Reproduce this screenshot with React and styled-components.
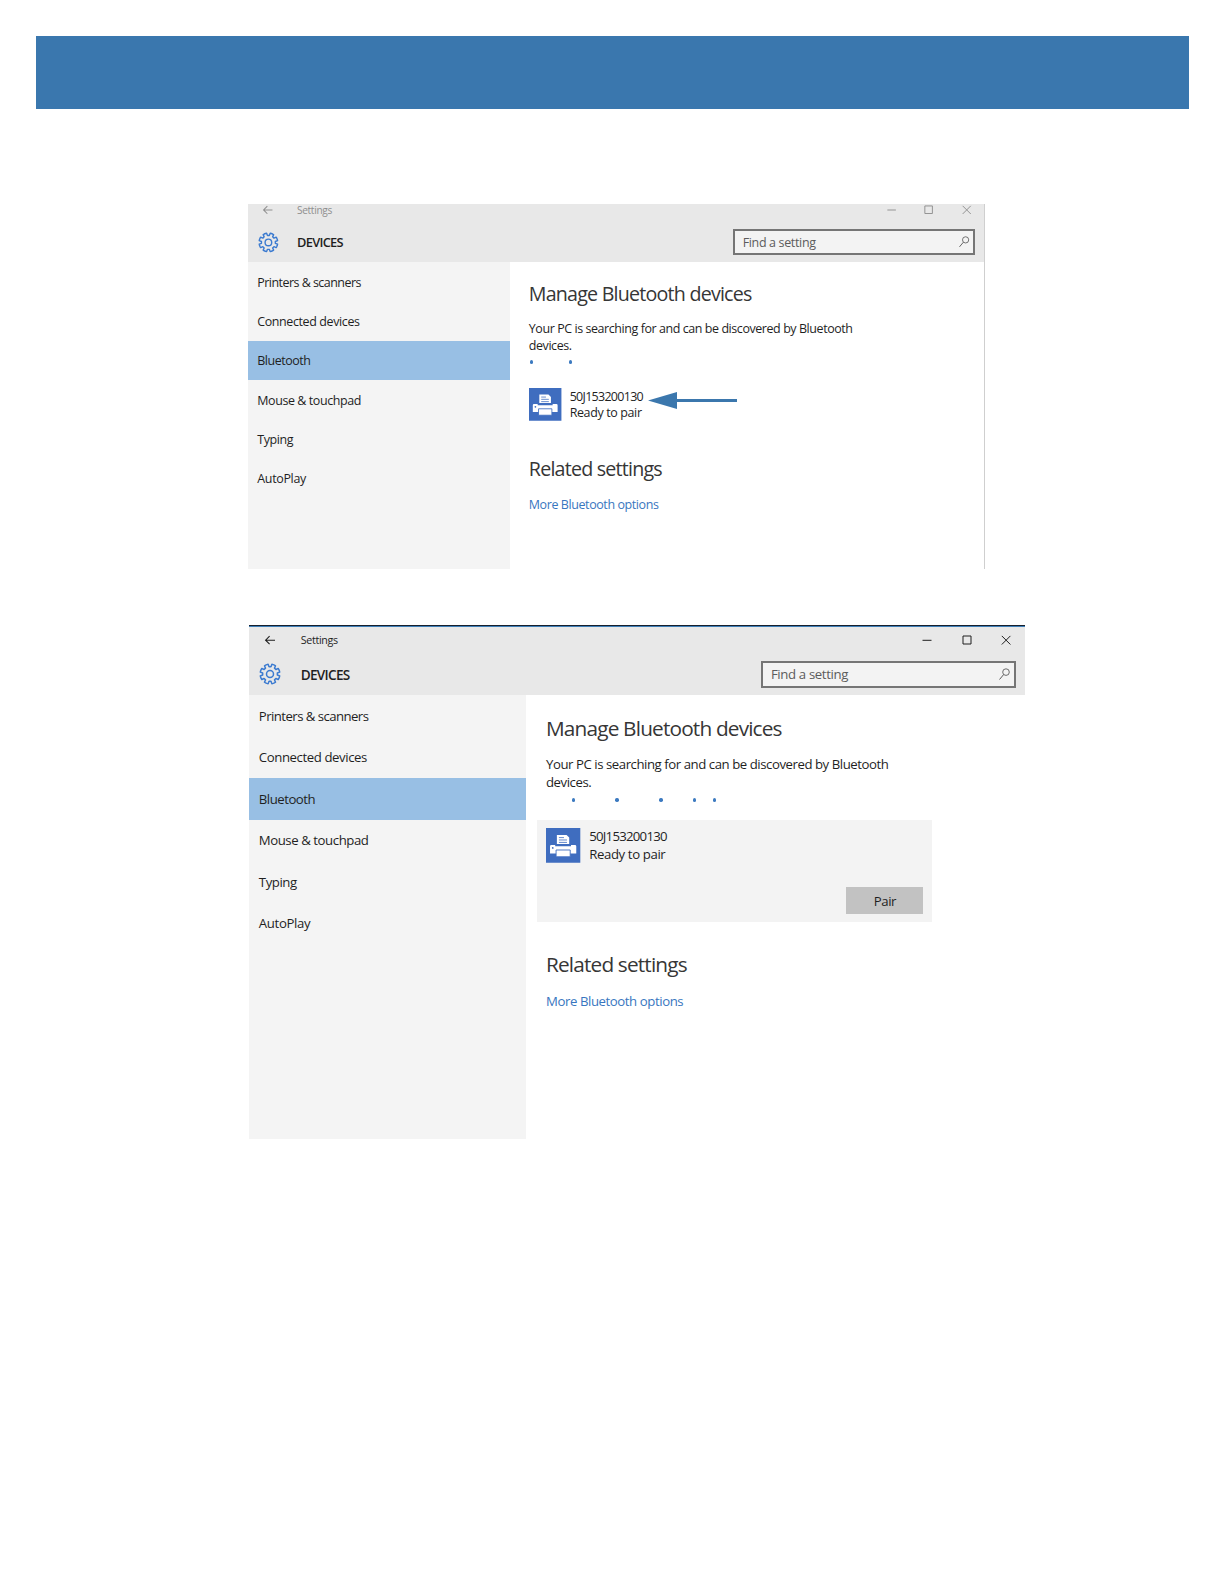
import React from "react";
import styled, { createGlobalStyle, ThemeProvider, css } from "styled-components";

const GlobalStyle = createGlobalStyle`
  body {
    margin: 0;
    background: #fff;
  }
  *, *::before, *::after {
    box-sizing: border-box;
  }
`;

/* Converts a design unit to pixels at the scale of the current window. */
const u = (n) => ({ theme }) => `${+(n * theme.scale).toFixed(3)}px`;

const Page = styled.div`
  height: 1584px;
  padding: 36px 35px 0 36px;
  font-family: "Open Sans", "Noto Sans", sans-serif;
  color: #1f1f1f;
`;

const Banner = styled.header`
  height: 73px;
  background: #3a77ae;
`;

const Figures = styled.main`
  display: flex;
  flex-direction: column;
  align-items: flex-start;
  gap: 56px;
  padding: 95px 0 0 212px;
`;

const Window = styled.section`
  display: flex;
  flex-direction: column;
  width: ${({ $width }) => $width}px;
  height: ${({ $height }) => $height}px;
  font-size: ${u(13.2)};
  white-space: nowrap;
  ${({ $edge }) => $edge && css`
    border-right: 1px solid #cfcfcf;
  `}
  ${({ $offset }) => $offset && css`
    margin-left: ${$offset}px;
  `}
`;

const Text = styled.span`
  letter-spacing: ${({ $track = -0.033 }) => $track}em;
`;

const Head = styled.div`
  display: flex;
  flex-direction: column;
  justify-content: flex-end;
  flex: none;
  height: ${({ $height }) => $height}px;
  overflow: hidden;
  background: #e8e8e8;
  ${({ $accent }) => $accent && css`
    border-top: 1px solid #17202c;
    box-shadow: inset 0 1px #3f7fb8;
  `}
`;

const TitleBar = styled.div`
  display: flex;
  align-items: center;
  flex: none;
  height: ${u(26)};
  font-size: ${u(10.7)};
  color: ${({ $inactive }) => ($inactive ? "#8f8f8f" : "#1f1f1f")};
`;

const HeaderRow = styled.div`
  display: flex;
  align-items: center;
  flex: none;
  height: ${u(42)};
  padding-right: ${u(9.2)};
`;

const IconCell = styled.div`
  display: flex;
  justify-content: center;
  flex: none;
  width: ${u(42.6)};
  margin-right: ${u(9.2)};
`;

const WindowControls = styled.div`
  display: flex;
  margin-left: auto;
  margin-right: ${u(-0.8)};

  svg {
    margin: 0 ${u(12.7)};
  }
`;

const AppTitle = styled(Text)`
  font-size: ${u(13.6)};
  font-weight: 600;
`;

const SearchBox = styled.div`
  display: flex;
  align-items: center;
  justify-content: space-between;
  width: ${({ $width }) => $width}px;
  height: ${u(27)};
  margin-left: auto;
  padding: 0 ${u(4)} 0 ${u(7.8)};
  border: 2px solid #757575;
  background: #f3f3f3;
  color: #5c5c5c;
`;

const Body = styled.div`
  display: flex;
  flex: 1;
`;

const Sidebar = styled.nav`
  flex: none;
  width: ${u(276.6)};
  padding-top: ${({ $inset }) => $inset}px;
  background: #f4f4f4;
`;

const NavItem = styled.div`
  display: flex;
  align-items: center;
  height: ${u(41.5)};
  padding-left: ${u(9.8)};
  background: ${({ $active }) => ($active ? "#98bfe4" : "transparent")};
`;

const Content = styled.div`
  flex: 1;
  padding: ${u(19)} 0 0 ${u(20.4)};
  margin-top: ${({ $inset }) => $inset}px;
`;

const Heading = styled.h2`
  margin: 0;
  font-size: ${u(20.8)};
  font-weight: 400;
  line-height: ${u(28)};
  letter-spacing: -0.04em;
  color: #363636;
`;

const Status = styled.p`
  margin: ${u(14.4)} 0 0;
  line-height: ${u(17.9)};
`;

const Progress = styled.div`
  display: flex;
  height: 4px;
  margin-top: ${u(6.2)};
`;

const Dot = styled.i`
  width: 3.4px;
  height: 3.4px;
  margin-left: ${({ $gap }) => $gap}px;
  border-radius: 50%;
  background: #3c7ac0;
`;

const DeviceCard = styled.div`
  display: flex;
  flex-direction: column;
  justify-content: space-between;
  width: ${u(395)};
  height: ${({ $open }) => u($open ? 102.5 : 52.5)};
  margin: ${u(17.3)} 0 0 ${u(-8.7)};
  padding: ${u(8)} ${u(9)} ${u(8.5)} ${u(9)};
  background: ${({ $open }) => ($open ? "#f3f3f3" : "transparent")};
`;

const DeviceRow = styled.div`
  display: flex;
`;

const DeviceText = styled.div`
  display: flex;
  flex-direction: column;
  width: ${u(83.4)};
  margin-left: ${u(8.6)};
  padding-top: ${u(0.4)};
  line-height: ${u(17.6)};
`;

const PairButton = styled.button`
  align-self: flex-end;
  width: ${u(77.7)};
  height: ${u(27)};
  padding: 1px 0 0 1px;
  border: 0;
  background: #c2c2c2;
  color: inherit;
  font: inherit;
`;

const Related = styled.div`
  padding-top: ${u(27.5)};
`;

const Link = styled.div`
  margin-top: ${u(15.2)};
  line-height: ${u(17.4)};
  color: #3876c0;
`;

const Glyph = styled.svg`
  display: block;
  flex: none;
  width: ${({ $w }) => u($w)};
  height: ${({ $h }) => u($h)};
  overflow: visible;
  fill: none;
  stroke: currentColor;
`;

const Pointer = styled.svg`
  display: block;
  flex: none;
  width: 89px;
  height: 17px;
  margin-top: 4px;
`;

const gearPath = (() => {
  const points = [];
  const tooth = [[-15, 7.4], [-11.5, 9.9], [-4, 9.9], [4, 9.9], [11.5, 9.9], [15, 7.4]];
  for (let i = 0; i < 8; i += 1) {
    const mid = 22.5 + i * 45;
    tooth.forEach(([offset, r]) => {
      const a = ((mid + offset) * Math.PI) / 180;
      points.push(`${(r * Math.sin(a)).toFixed(2)} ${(-r * Math.cos(a)).toFixed(2)}`);
    });
  }
  return `M${points.join("L")}Z`;
})();

const GearIcon = () => (
  <Glyph $w={22} $h={22} viewBox="-11 -11 22 22" color="#3c7bd0">
    <path d={gearPath} strokeWidth="1.5" strokeLinejoin="round" />
    <circle r="3.5" strokeWidth="1.5" />
  </Glyph>
);

const BackIcon = () => (
  <Glyph $w={10} $h={9} viewBox="0 0 10 9">
    <path d="M10 4.2H.4M4.6.2l-4 4 4 4" strokeWidth="1.1" />
  </Glyph>
);

const SearchIcon = () => (
  <Glyph $w={11} $h={12} viewBox="0 0 11 12">
    <circle cx="7" cy="4.1" r="3.3" strokeWidth=".9" />
    <path d="M4.6 6.6.5 11.5" strokeWidth="1" />
  </Glyph>
);

const PrinterIcon = () => (
  <Glyph $w={34.3} $h={34.7} viewBox="0 0 34 34.7" preserveAspectRatio="none">
    <path d="M0 0h34v34.7H0z" fill="#3f6dbf" stroke="none" />
    <path d="M10.8 7h9.6L23 9.4V16H10.8z" fill="#fff" stroke="none" />
    <path d="M12.8 9.6h5M12.8 12h8M12.8 14.4h8" stroke="#3f6dbf" strokeWidth=".8" />
    <path
      d="M5.2 16.9h3.9v1.3h15.7v-1.3h3.9q1.3 0 1.3 1.3v7.3H4v-7.3q0-1.3 1.2-1.3z"
      fill="#fff"
      stroke="none"
    />
    <path d="M10 22h14v6.8H10z" fill="#fff" stroke="#3f6dbf" strokeWidth=".9" />
    <circle cx="6.7" cy="19.9" r=".9" fill="#3f6dbf" stroke="none" />
  </Glyph>
);

const Controls = () => (
  <WindowControls>
    <Glyph $w={14} $h={10} viewBox="-2 0 14 10">
      <path d="M.5 5.3h9" />
    </Glyph>
    <Glyph $w={14} $h={10} viewBox="-2 0 14 10">
      <path d="M1 1h8v8H1z" />
    </Glyph>
    <Glyph $w={14} $h={10} viewBox="-2 0 14 10">
      <path d="m.8.9 8.6 8.6M9.4.9.8 9.5" />
    </Glyph>
  </WindowControls>
);

const ArrowPointer = () => (
  <Pointer viewBox="0 0 89 17" fill="#3b77ad">
    <path d="M0 8.5 29 0v7h60v3H29v7z" />
  </Pointer>
);

const NAV = [
  ["Printers & scanners", -0.042],
  ["Connected devices", -0.031],
  ["Bluetooth", -0.037],
  ["Mouse & touchpad", -0.033],
  ["Typing", -0.032],
  ["AutoPlay", -0.026],
];

function SettingsWindow({
  width,
  height,
  headHeight,
  searchWidth,
  scale,
  offset,
  inset = 0,
  inactive,
  open,
  dots,
}) {
  return (
    <ThemeProvider theme={{ scale }}>
      <Window $width={width} $height={height} $edge={inactive} $offset={offset}>
        <Head $height={headHeight} $accent={!inactive}>
          <TitleBar $inactive={inactive}>
            <IconCell>
              <BackIcon />
            </IconCell>
            <Text $track={-0.03}>Settings</Text>
            <Controls />
          </TitleBar>
          <HeaderRow>
            <IconCell>
              <GearIcon />
            </IconCell>
            <AppTitle $track={-0.054}>DEVICES</AppTitle>
            <SearchBox $width={searchWidth}>
              <Text $track={-0.027}>Find a setting</Text>
              <SearchIcon />
            </SearchBox>
          </HeaderRow>
        </Head>
        <Body>
          <Sidebar $inset={inset}>
            {NAV.map(([label, track]) => (
              <NavItem key={label} $active={label === "Bluetooth"}>
                <Text $track={track}>{label}</Text>
              </NavItem>
            ))}
          </Sidebar>
          <Content $inset={inset}>
            <Heading>Manage Bluetooth devices</Heading>
            <Status>
              <Text $track={-0.034}>
                Your PC is searching for and can be discovered by Bluetooth
                <br />
                devices.
              </Text>
            </Status>
            <Progress>
              {dots.map((gap, i) => (
                <Dot key={i} $gap={gap} />
              ))}
            </Progress>
            <DeviceCard $open={open}>
              <DeviceRow>
                <PrinterIcon />
                <DeviceText>
                  <Text $track={-0.056}>50J153200130</Text>
                  <Text $track={-0.029}>Ready to pair</Text>
                </DeviceText>
                {!open && <ArrowPointer />}
              </DeviceRow>
              {open && (
                <PairButton>
                  <Text>Pair</Text>
                </PairButton>
              )}
            </DeviceCard>
            <Related>
              <Heading>Related settings</Heading>
              <Link>
                <Text $track={-0.032}>More Bluetooth options</Text>
              </Link>
            </Related>
          </Content>
        </Body>
      </Window>
    </ThemeProvider>
  );
}

export default function App() {
  return (
    <>
      <GlobalStyle />
      <Page>
        <Banner />
        <Figures>
          <SettingsWindow
            width={737}
            height={365}
            headHeight={58}
            searchWidth={242}
            scale={0.9455}
            inset={0.7}
            inactive
            dots={[1, 35.6]}
          />
          <SettingsWindow
            width={776}
            height={514}
            headHeight={70}
            searchWidth={254.7}
            scale={1}
            offset={1}
            open
            dots={[25.8, 40.3, 40.6, 30.2, 16.1]}
          />
        </Figures>
      </Page>
    </>
  );
}
